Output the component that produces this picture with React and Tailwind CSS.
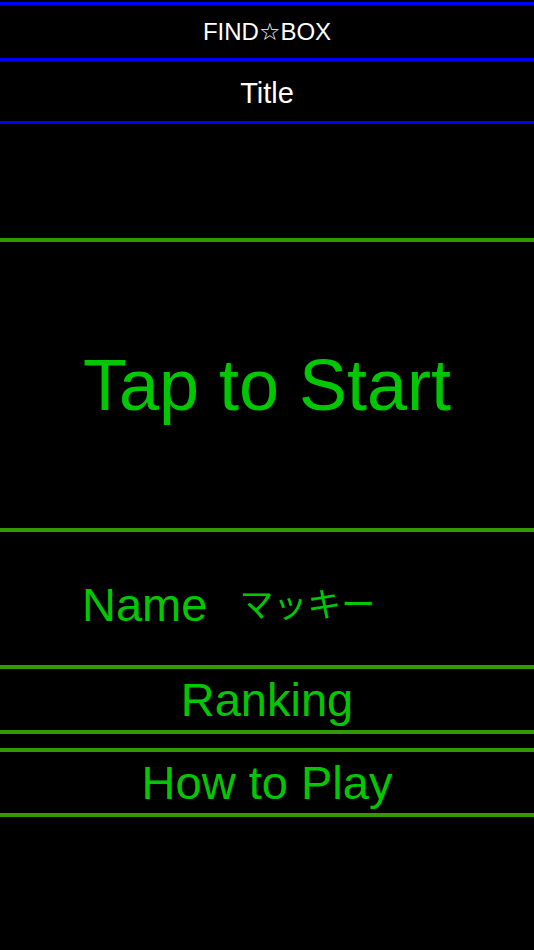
import React from 'react';

const sans = { fontFamily: '"Liberation Sans", Arial, sans-serif' };

const MenuButton = ({ label }) => (
  <div className="h-[69px] border-y-4 border-[#339900] flex items-center justify-center">
    <span className="text-[47px] leading-none text-[#00c800]">{label}</span>
  </div>
);

const App = () => {
  return (
    <div className="w-full min-h-screen h-[950px] bg-black pt-[2px]" style={sans}>
      {/* header */}
      <div className="border-y-[3px] border-[#0000ff]">
        <div className="h-[53px] flex items-center justify-center">
          <span className="text-[24px] leading-none text-white">
            FIND<span style={{ fontFamily: '"DejaVu Sans", sans-serif' }}>☆</span>BOX
          </span>
        </div>
      </div>
      <div className="h-[63px] border-b-[3px] border-[#0000ff] flex items-center justify-center pt-[5px]">
        <span className="text-[29px] leading-none text-white">Title</span>
      </div>

      <div className="h-[114px]" />

      {/* start */}
      <div className="h-[294px] border-y-4 border-[#339900] flex items-center justify-center">
        <span className="text-[72px] leading-none text-[#00c800]">Tap to Start</span>
      </div>

      {/* name */}
      <div className="h-[137px] border-b-4 border-[#339900] flex items-center pl-[82px] pt-3">
        <span className="text-[47px] leading-none text-[#00c800]">Name</span>
        <span
          className="ml-[32px] text-[34px] leading-none text-[#00c800] pb-1"
          style={{ fontFamily: '"Noto Sans CJK JP", sans-serif' }}
        >
          マッキー
        </span>
      </div>

      <div className="-mt-1">
        <MenuButton label="Ranking" />
      </div>
      <div className="h-[14px]" />
      <MenuButton label="How to Play" />
    </div>
  );
};

export default App;
